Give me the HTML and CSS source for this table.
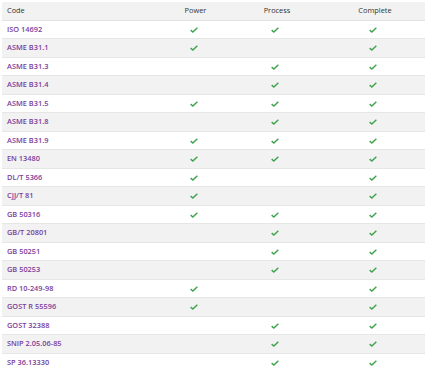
FILE: index.html
```html
<!DOCTYPE html>
<html lang="en">
<head>
    <meta charset="UTF-8">
    <title>Code Coverage</title>
    <link rel="stylesheet" href="styles.css">
</head>
<body>
    <table class="codes">
        <colgroup>
            <col class="col-code">
            <col class="col-power">
            <col class="col-process">
            <col class="col-complete">
        </colgroup>
        <thead>
            <tr>
                <th class="code-head">Code</th>
                <th>Power</th>
                <th>Process</th>
                <th>Complete</th>
            </tr>
        </thead>
        <tbody id="rows"></tbody>
    </table>

    <script>
        const data = [
            ['ISO 14692', 1, 1, 1],
            ['ASME B31.1', 1, 0, 1],
            ['ASME B31.3', 0, 1, 1],
            ['ASME B31.4', 0, 1, 1],
            ['ASME B31.5', 1, 1, 1],
            ['ASME B31.8', 0, 1, 1],
            ['ASME B31.9', 1, 1, 1],
            ['EN 13480', 1, 1, 1],
            ['DL/T 5366', 1, 0, 1],
            ['CJJ/T 81', 1, 0, 1],
            ['GB 50316', 1, 1, 1],
            ['GB/T 20801', 0, 1, 1],
            ['GB 50251', 0, 1, 1],
            ['GB 50253', 0, 1, 1],
            ['RD 10-249-98', 1, 0, 1],
            ['GOST R 55596', 1, 0, 1],
            ['GOST 32388', 0, 1, 1],
            ['SNIP 2.05.06-85', 0, 1, 1],
            ['SP 36.13330', 0, 1, 1]
        ];

        const check = '<svg class="check" viewBox="0 0 10 7" width="8" height="6"><path d="M0.8 3.6 L3.6 6 L9.2 0.8" fill="none" stroke="currentColor" stroke-width="1.8"/></svg>';

        const body = document.getElementById('rows');
        data.forEach(function(row) {
            const tr = document.createElement('tr');
            let html = '<td class="code"><a href="#">' + row[0] + '</a></td>';
            for (let i = 1; i < 4; i++) {
                html += '<td class="mark">' + (row[i] ? check : '') + '</td>';
            }
            tr.innerHTML = html;
            body.appendChild(tr);
        });
    </script>
</body>
</html>
```

FILE: styles.css
```css
body {
    margin: 0;
    padding: 2px 5px 0 2px;
    background-color: #fff;
    font-family: 'Open Sans', sans-serif;
    font-size: 7.4px;
    color: #333;
}
.codes {
    width: 423px;
    border-collapse: collapse;
    table-layout: fixed;
}
.col-code {
    width: 160px;
}
.col-power {
    width: 67px;
}
.col-process {
    width: 96px;
}
.col-complete {
    width: 100px;
}
th, td {
    padding: 4px 0;
    line-height: 9.5px;
    border-bottom: 1px solid #e6e6e6;
    text-align: center;
}
th {
    font-weight: 400;
    background-color: #f2f2f2;
    border-bottom: 1px solid #e2e2e2;
}
th.code-head, td.code {
    text-align: left;
    padding-left: 5px;
}
tbody tr:nth-child(even) td {
    background-color: #f2f2f2;
}
tbody tr:last-child td {
    border-bottom: none;
}
.code a {
    color: #7a3d9c;
    font-weight: 600;
    text-decoration: none;
}
.mark {
    color: #3fa34d;
}
.check {
    display: inline-block;
    vertical-align: middle;
    margin-left: -4px;
}
```
